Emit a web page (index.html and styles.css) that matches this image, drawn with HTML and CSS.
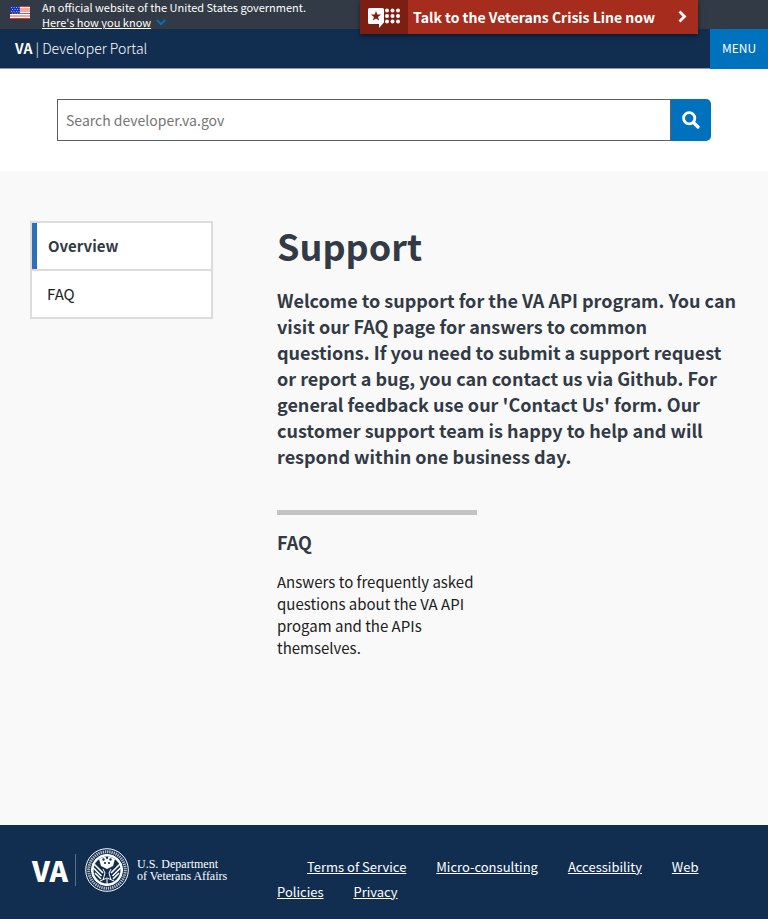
FILE: index.html
```html
<!DOCTYPE html>
<html lang="en">
<head>
<meta charset="utf-8">
<meta name="viewport" content="width=device-width, initial-scale=1">
<title>Support | VA Developer Portal</title>
<link rel="stylesheet" href="styles.css">
</head>
<body>
<div class="gov-banner">
  <svg class="flag" width="20" height="13" viewBox="0 0 20 13" aria-hidden="true">
    <rect width="20" height="13" fill="#fff"/>
    <path d="M0 .5h20M0 12.500h20" stroke="#db3e1f"/>
    <path d="M0 3h20M0 5h20M0 7.500h20M0 10h20" stroke="#e2534c" stroke-width="1.100"/>
    <rect width="10" height="8" fill="#1e33b1"/>
    <path d="M1 1.500h9M2 3.500h8M1 5.500h9M2 7.200h8" stroke="#aab2ea" stroke-dasharray="1 1.500"/>
  </svg>
  <div class="gov-text">
    <span>An official website of the United States government.</span>
    <button class="gov-toggle" type="button"><span class="gov-label">Here's how you know</span><svg width="10" height="7" viewBox="0 0 10 7" aria-hidden="true"><path d="M.8 1l4.200 4.200L9.200 1" fill="none" stroke="#0071bc" stroke-width="2"/></svg></button>
  </div>
</div>
<a class="crisis" href="#crisis">
  <span class="crisis-icon"><svg width="34" height="22" viewBox="0 0 34 22" aria-hidden="true">
    <path fill="#fff" d="M1.500 1h13A1.500 1.500 0 0 1 16 2.500v12.500a1.500 1.500 0 0 1-.8 1.300L11 21v-4H1.500A1.500 1.500 0 0 1 0 15.500v-13A1.500 1.500 0 0 1 1.500 1z"/>
    <path fill="#7c1e12" d="M8 4l1.300 3.600h3.800L10 9.900l1.200 3.700L8 11.400l-3.200 2.200L6 9.900 2.900 7.600h3.800z"/>
    <g fill="#fff"><circle cx="19" cy="3.500" r="2"/><circle cx="24.500" cy="3.500" r="2"/><circle cx="30" cy="3.500" r="2"/><circle cx="19" cy="9" r="2"/><circle cx="24.500" cy="9" r="2"/><circle cx="30" cy="9" r="2"/><circle cx="19" cy="14.500" r="2"/><circle cx="24.500" cy="14.500" r="2"/><circle cx="30" cy="14.500" r="2"/></g>
  </svg></span>
  <span class="crisis-text">Talk to the Veterans Crisis Line now</span>
  <svg class="crisis-arrow" width="9" height="13" viewBox="0 0 9 13" aria-hidden="true"><path d="M1.500 1.500l5 5-5 5" fill="none" stroke="#fff" stroke-width="2.800"/></svg>
</a>
<header class="site-header">
  <a class="brand" href="#home"><b>VA</b> <span class="brand-light">| Developer Portal</span></a>
  <button class="menu" type="button">MENU</button>
</header>
<form class="search" role="search">
  <input class="search-input" type="text" aria-label="Search developer.va.gov" placeholder="Search developer.va.gov">
  <button class="search-button" type="submit" aria-label="Search"><svg width="18" height="18" viewBox="0 0 18 18" aria-hidden="true"><circle cx="7.200" cy="7.200" r="5.600" fill="none" stroke="#fff" stroke-width="2.800"/><path d="M11.500 11.500l4.500 4.500" stroke="#fff" stroke-width="3.200" stroke-linecap="round"/></svg></button>
</form>
<div class="content">
  <nav class="side-nav" aria-label="Support">
    <a class="side-link current" href="#overview">Overview</a>
    <a class="side-link" href="#faq">FAQ</a>
  </nav>
  <main class="main">
    <h1>Support</h1>
    <p class="intro">Welcome to support for the VA API program. You can visit our FAQ page for answers to common questions. If you need to submit a support request or report a bug, you can contact us via Github. For general feedback use our 'Contact Us' form. Our customer support team is happy to help and will respond within one business day.</p>
    <a class="card" href="#faq">
      <h2>FAQ</h2>
      <p>Answers to frequently asked questions about the VA API progam and the APIs themselves.</p>
    </a>
  </main>
</div>
<footer class="footer">
  <div class="logo">
    <span class="logo-va">VA</span>
    <svg class="seal" width="44" height="44" viewBox="0 0 44 44" aria-hidden="true">
      <g fill="none" stroke="#fff"><circle cx="22" cy="22" r="21.300"/><circle cx="22" cy="22" r="18.300" stroke-width="3" stroke-dasharray="1.300 .9" opacity=".7"/><circle cx="22" cy="22" r="15.600"/></g>
      <path d="M22 7.500a14.500 14.500 0 0 1 0 29" fill="none" stroke="#fff" stroke-width="2"/>
      <path d="M22 7.500a14.500 14.500 0 0 0 0 29" fill="none" stroke="#fff" stroke-width="2"/>
      <path fill="#fff" d="M14 11q8-5 16 0l-2 7-6 3-6-3z"/>
      <g fill="#112e51"><circle cx="18.500" cy="11.500" r="1.200"/><circle cx="22" cy="9.800" r="1.200"/><circle cx="25.500" cy="11.500" r="1.200"/><circle cx="20" cy="15" r="1.100"/><circle cx="24" cy="15" r="1.100"/></g>
      <path fill="none" stroke="#fff" stroke-width="1.600" d="M9 16l9 9M8.500 20l8 8M10 25l6 6M35 16l-9 9M35.500 20l-8 8M34 25l-6 6"/>
      <path fill="none" stroke="#fff" d="M18 21l2 4-2 7M26 21l-2 4 2 7M15 33l7-3 7 3M22 31v5"/>
    </svg>
    <span class="logo-text">U.S. Department<br>of Veterans Affairs</span>
  </div>
  <nav class="footer-links" aria-label="Footer">
    <a href="#terms">Terms of Service</a>
    <a href="#micro">Micro-consulting</a>
    <a href="#access">Accessibility</a>
    <a href="#policies">Web Policies</a>
    <a href="#privacy">Privacy</a>
  </nav>
</footer>
</body>
</html>
```
FILE: styles.css
```css
* { box-sizing: border-box; }

body {
  margin: 0;
  min-height: 100vh;
  display: flex;
  flex-direction: column;
  position: relative;
  background: #f9f9f9;
  color: #212121;
  font: 15px/22px "Noto Sans CJK SC", "Open Sans", sans-serif;
}

a { color: inherit; text-decoration: none; }
button { border: 0; padding: 0; color: #fff; background: none; font: inherit; cursor: pointer; }
h1, h2, p { margin: 0; }

.gov-banner {
  display: flex;
  height: 29px;
  padding: 0 10px;
  gap: 12px;
  background: #323a45;
  color: #fff;
  font-size: 11px;
  line-height: 15px;
}
.flag { margin-top: 6px; }
.gov-text { display: flex; flex-direction: column; align-items: flex-start; }
.gov-toggle { display: flex; align-items: center; gap: 5px; }
.gov-label { text-decoration: underline; }

.crisis {
  position: absolute;
  top: 0;
  right: 70px;
  width: 338px;
  height: 34px;
  display: flex;
  align-items: center;
  background: #a62d1e;
  color: #fff;
  font-weight: 700;
  font-size: 14px;
  box-shadow: 0 2px 5px rgba(0, 0, 0, .5);
}
.crisis-icon { align-self: stretch; width: 48px; padding: 7px 8px; background: #7c1e12; }
.crisis-icon svg { display: block; }
.crisis-text { flex: 1; padding-left: 5px; }
.crisis-arrow { margin: 0 11px 2px 0; }

.site-header {
  display: flex;
  justify-content: space-between;
  height: 40px;
  background: #112e51;
  color: #fff;
  box-shadow: inset 0 -1px #8e99a7;
}
.brand { padding: 8px 15px; font-size: 14px; }
.brand-light { font-family: "Noto Sans CJK SC Light", "Noto Sans CJK SC", sans-serif; font-weight: 200; }
.menu { width: 58px; padding-bottom: 2px; background: #0071bc; font-size: 12px; }

.search { display: flex; padding: 30px 57px; background: #fff; }
.search-input {
  flex: 1;
  min-width: 0;
  height: 42px;
  padding: 0 8px;
  border: 1px solid #5b616b;
  border-radius: 0;
  font: inherit;
  font-size: 14px;
}
.search-input::placeholder { color: #757575; }
.search-button { display: grid; place-items: center; width: 40px; background: #0071bc; border-radius: 0 5px 5px 0; }

.content { flex: 1; display: flex; align-items: flex-start; gap: 64px; padding: 50px 30px 0; }
.side-nav { width: 183px; flex: none; border: 2px solid #dcdcdc; background: #fff; }
.side-link { display: block; padding: 12px 15px; }
.side-link + .side-link { border-top: 2px solid #dcdcdc; }
.current { padding-left: 11px; border-left: 5px solid #2e6fb7; color: #323a45; font-weight: 700; }

.main { flex: 1; color: #323a45; }
h1 { font-size: 36px; line-height: 48px; }
.intro { margin-top: 18px; font-size: 18px; line-height: 26px; font-weight: 700; }
.card { display: block; width: 200px; margin-top: 41px; padding-top: 14px; border-top: 5px solid #c3c3c3; }
.card h2 { font-size: 18px; line-height: 26px; }
.card p { margin-top: 16px; color: #212121; }

.footer { display: flex; gap: 48px; padding: 23px 30px 15px 32px; background: #112e51; color: #fff; }
.logo { display: flex; flex: none; width: 197px; height: 44px; align-items: center; }
.logo-va { width: 44px; border-right: 1px solid #5c708a; font-size: 28px; line-height: 32px; font-weight: 900; }
.seal { margin: 0 8px 0 9px; flex: none; }
.logo-text { font: 12px/12px "Liberation Serif", serif; white-space: nowrap; }
.footer-links { padding-top: 6px; font-size: 13px; line-height: 25px; }
.footer-links a { margin-left: 27px; text-decoration: underline; }
.footer-links a:first-child { margin-left: 30px; }
```
